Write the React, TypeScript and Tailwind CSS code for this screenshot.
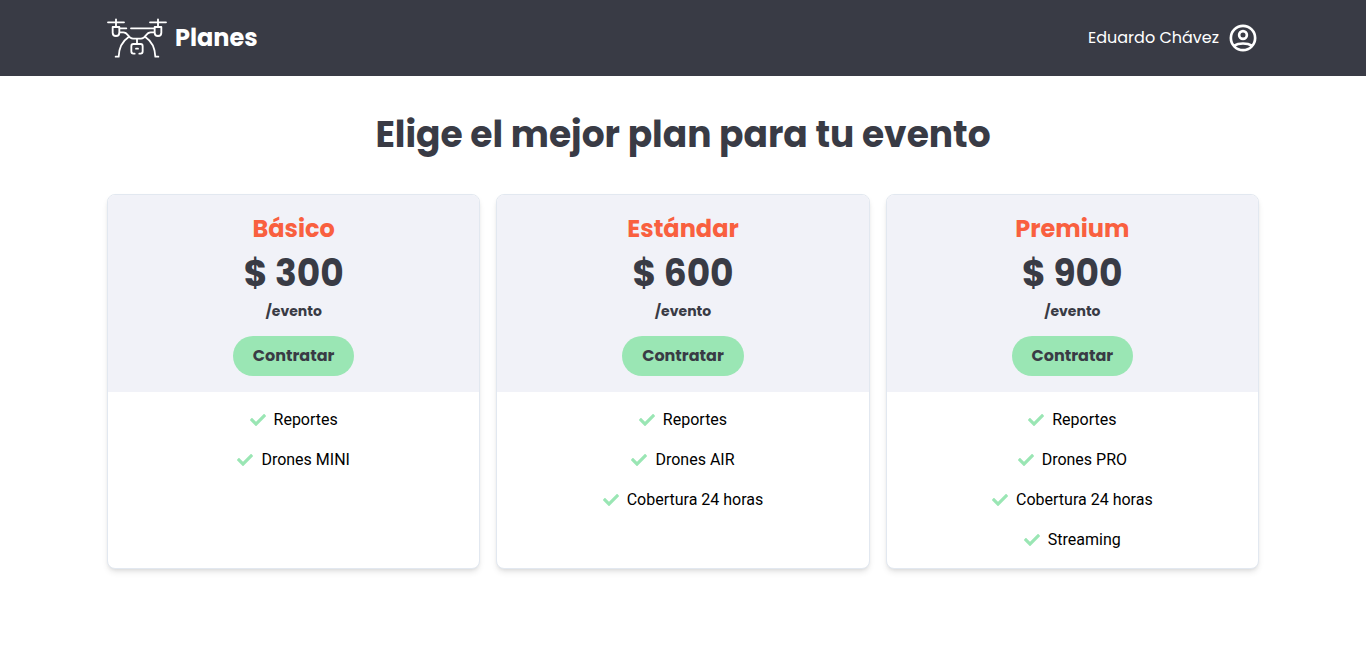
import { FaCheck } from "react-icons/fa";

type Plan = { name: string; price: number; features: string[] };

const plans: Plan[] = [
  { name: "Básico", price: 300, features: ["Reportes", "Drones MINI"] },
  { name: "Estándar", price: 600, features: ["Reportes", "Drones AIR", "Cobertura 24 horas"] },
  { name: "Premium", price: 900, features: ["Reportes", "Drones PRO", "Cobertura 24 horas", "Streaming"] },
];

function DroneLogo() {
  return (
    <svg
      viewBox="0 0 180 120"
      className="h-10 w-15 shrink-0"
      fill="none"
      stroke="#ffffff"
      strokeWidth="5.5"
      strokeLinecap="round"
      strokeLinejoin="round"
      aria-hidden="true"
    >
      <path d="M3 13H51M129 13H177M27 4V25M153 4V25" />
      <path d="M17 27H37V44Q37 54 27 54Q17 54 17 44ZM143 27H163V44Q163 54 153 54Q143 54 143 44Z" />
      <path d="M38 31H58M72 31H142" />
      <path d="M38 43H49C57 43 59 46 63 52C67 58 70 62 78 62H102C110 62 113 58 117 52C121 46 123 43 131 43H142" />
      <path d="M26 116H35C36 87 47 69 65 57M154 116H145C144 87 133 69 115 57" />
      <path d="M90 63V76M83 107H79Q73 107 73 100V85Q73 78 79 78H101Q107 78 107 85V100Q107 107 101 107H97M87 92H93" />
    </svg>
  );
}

function AccountIcon() {
  return (
    <svg
      viewBox="0 0 24 24"
      className="size-8 shrink-0"
      fill="none"
      stroke="currentColor"
      strokeWidth="2"
      aria-hidden="true"
    >
      <circle cx="12" cy="12" r="9.1" />
      <circle cx="12" cy="9.75" r="2.9" />
      <path d="M5.4 17.7C8.6 15.6 15.4 15.6 18.6 17.7" />
    </svg>
  );
}

function PlanCard({ plan }: { plan: Plan }) {
  return (
    <article className="overflow-hidden rounded-lg border border-[#e2e8f0] bg-white shadow-md">
      <div className="flex flex-col items-center bg-[#f1f2f8] p-4 font-['Poppins',Inter,sans-serif] font-bold text-[#393b45]">
        <h2 className="text-2xl leading-9 text-[#f9603f]">{plan.name}</h2>
        <p className="text-4xl leading-[54px]">$ {plan.price}</p>
        <p className="text-sm leading-[21px]">/evento</p>
        <button type="button" className="mt-3.5 rounded-full bg-[#9ae6b4] px-5 py-2 text-base leading-6">
          Contratar
        </button>
      </div>
      <ul className="flex flex-col items-center gap-4 p-4 text-black">
        {plan.features.map((feature) => (
          <li key={feature} className="flex items-center gap-2">
            <FaCheck className="size-4 text-[#9ae6b4]" aria-hidden="true" />
            {feature}
          </li>
        ))}
      </ul>
    </article>
  );
}

export default function App() {
  return (
    <div className="min-h-screen bg-white font-['Roboto',sans-serif] text-base">
      <header className="bg-[#393b45] font-['Poppins',Inter,sans-serif] text-white">
        <div className="mx-auto flex max-w-6xl items-center justify-between py-[18px]">
          <div className="flex items-center gap-2">
            <DroneLogo />
            <span className="text-2xl leading-8 font-bold">Planes</span>
          </div>
          <div className="flex items-center gap-2">
            <span>Eduardo Chávez</span>
            <AccountIcon />
          </div>
        </div>
      </header>
      <main className="mx-auto max-w-6xl py-8">
        <h1 className="mb-8 text-center font-['Poppins',Inter,sans-serif] text-4xl leading-[54px] font-bold text-[#393b45]">
          Elige el mejor plan para tu evento
        </h1>
        <section className="grid grid-cols-3 gap-4">
          {plans.map((plan) => (
            <PlanCard key={plan.name} plan={plan} />
          ))}
        </section>
      </main>
    </div>
  );
}
